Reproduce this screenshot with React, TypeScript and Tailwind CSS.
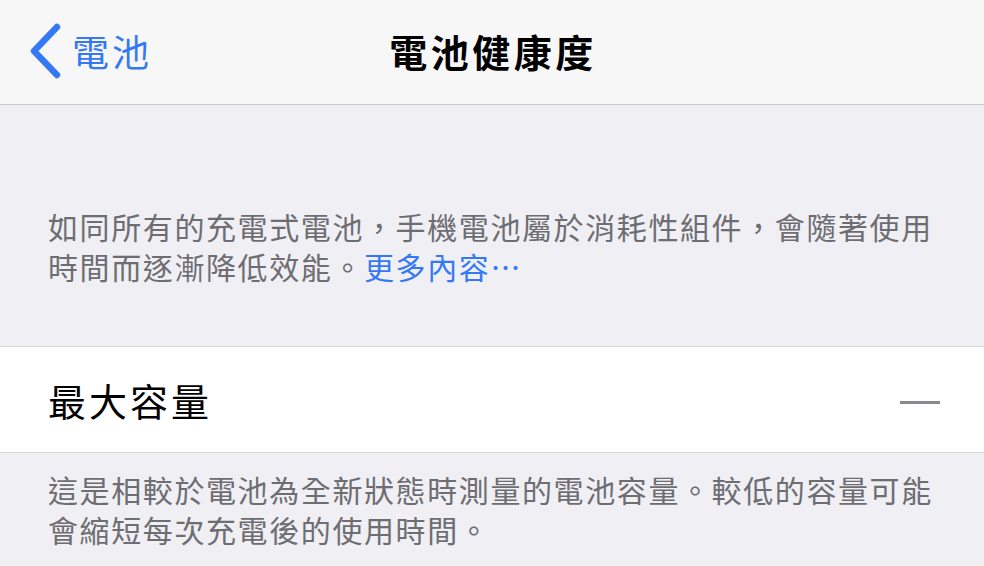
const FONT = { fontFamily: '"Noto Sans CJK TC", "Noto Sans", sans-serif' };

export default function App() {
  return (
    <div className="w-[984px] h-[566px] overflow-hidden bg-[#efeff4]" style={FONT}>
      <header className="h-[105px] bg-[#f7f7f8] border-b border-[#c8c7cc] grid grid-cols-[1fr_auto_1fr] items-center">
        <div className="flex items-center pl-[28px] pb-[2px]">
          <svg width="36" height="56" viewBox="0 0 36 56" className="mr-[8px]">
            <path
              d="M29 4 L6 28 L29 52"
              fill="none"
              stroke="#3478f6"
              strokeWidth="6.5"
              strokeLinecap="round"
              strokeLinejoin="round"
            />
          </svg>
          <span className="text-[37px] leading-none tracking-[3px] text-[#3478f6]">電池</span>
        </div>
        <h1 className="text-[38px] leading-none font-bold tracking-[3.5px] text-black pb-[2px] pl-[2px]">電池健康度</h1>
        <div />
      </header>

      <section className="pt-[101px] pb-[60px] px-[48px]">
        <p className="text-[30px] leading-[40px] tracking-[1.6px] text-[#6d6d72] whitespace-nowrap">
          如同所有的充電式電池，手機電池屬於消耗性組件，會隨著使用
          <br />
          時間而逐漸降低效能。<span className="text-[#3478f6]">更多內容…</span>
        </p>
      </section>

      <div className="h-[107px] bg-white border-y border-[#d8d8dc] flex items-center justify-between pl-[48px] pr-[44px]">
        <span className="text-[38px] leading-none tracking-[3px] text-black">最大容量</span>
        <div className="w-[40px] h-[3px] mt-[6px] bg-[#8a8a8e]" />
      </div>

      <section className="pt-[16px] px-[48px]">
        <p className="text-[30px] leading-[40px] tracking-[1.6px] text-[#6d6d72] whitespace-nowrap">
          這是相較於電池為全新狀態時測量的電池容量。較低的容量可能
          <br />
          會縮短每次充電後的使用時間。
        </p>
      </section>
    </div>
  );
}
